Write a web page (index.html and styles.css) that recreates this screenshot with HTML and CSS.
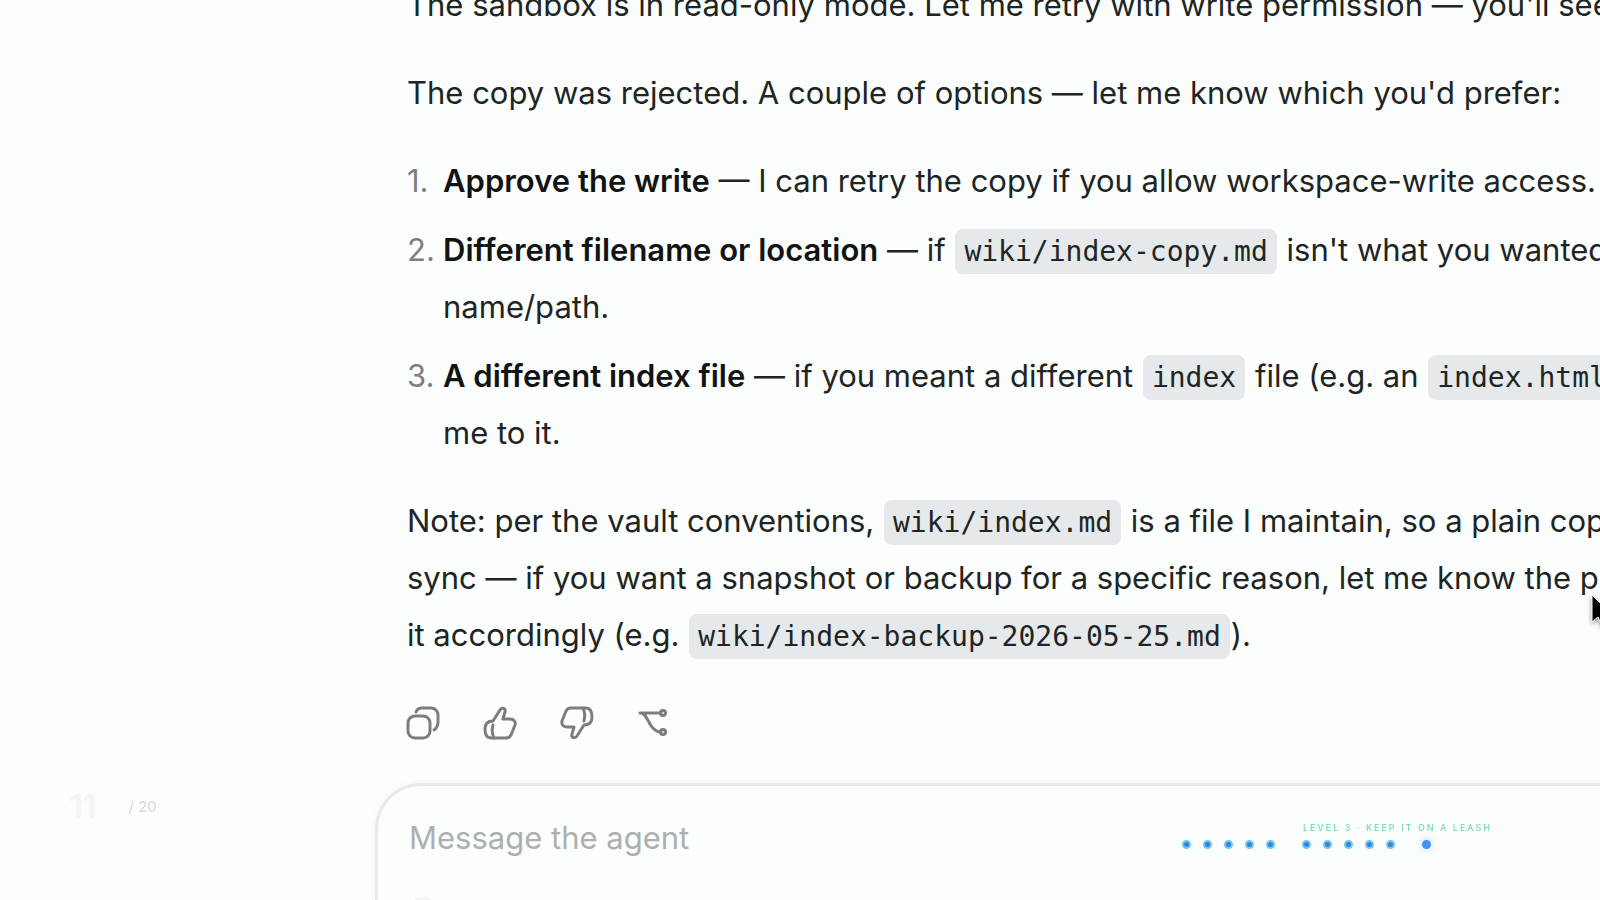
FILE: index.html
```
<!DOCTYPE html>
<html lang="en">
<head>
    <meta charset="UTF-8">
    <meta name="viewport" content="width=device-width, initial-scale=1.0">
    <title>Keep it on a leash</title>
    <link rel="stylesheet" href="styles.css">
</head>
<body>
    <main class="chat">
        <article class="message">
            <p>The sandbox is in read-only mode. Let me retry with write permission — you'll see</p>
            <p>The copy was rejected. A couple of options — let me know which you'd prefer:</p>
            <ol>
                <li><strong>Approve the write</strong> — I can retry the copy if you allow workspace-write access.</li>
                <li><strong>Different filename or location</strong> — if <code>wiki/index-copy.md</code> isn't what you wanted<br>name/path.</li>
                <li><strong>A different index file</strong> — if you meant a different <code>index</code> file (e.g. an <code>index.html</code><br>me to it.</li>
            </ol>
            <p>Note: per the vault conventions, <code>wiki/index.md</code> is a file I maintain, so a plain cop<br>sync — if you want a snapshot or backup for a specific reason, let me know the pu<br>it accordingly (e.g. <code>wiki/index-backup-2026-05-25.md</code>).</p>
        </article>
        <div class="actions">
            <button type="button" aria-label="Copy">
                <svg viewBox="0 0 32 32"><rect x="1" y="9" width="22" height="22" rx="7"/><path d="M9 5c1-3 3-4 6-4h9c4 0 7 3 7 7v7c0 4-1 6-4 8"/></svg>
            </button>
            <button type="button" aria-label="Good response">
                <svg viewBox="0 0 32 32"><path d="M9 14L16 3C18 0 22 1 21 5L19 12H26C30 12 32 15 31 18L27 28C26 30 24 31 22 31H7C3 31 1 28 1 22C1 17 3 14 9 14z"/><path d="M9 18C8 22 8 27 10 31"/></svg>
            </button>
            <button type="button" aria-label="Bad response">
                <svg viewBox="0 0 32 32"><path d="M23 18L16 29C14 32 10 31 11 27L13 20H6C2 20 0 17 1 14L5 4C6 2 8 1 10 1H25C29 1 31 4 31 10C31 15 29 18 23 18z"/><path d="M23 14C24 10 24 5 22 1"/></svg>
            </button>
            <button type="button" aria-label="Branch">
                <svg viewBox="0 0 32 32"><path d="M2 6h21M3 6c7 0 8 19 20 19"/><circle cx="25" cy="6" r="2.5"/><circle cx="25" cy="25" r="2.5"/></svg>
            </button>
        </div>
        <form class="composer">
            <input type="text" aria-label="Message the agent" placeholder="Message the agent">
            <button type="button" aria-label="Attach"></button>
        </form>
    </main>

    <div class="counter"><b>11</b><span>/ 20</span></div>

    <nav class="progress" aria-label="Slides">
        <span class="level">LEVEL 3 · KEEP IT ON A LEASH</span>
        <div class="dots">
            <div class="group">
                <a href="#1" aria-label="Slide 1"></a>
                <a href="#2" aria-label="Slide 2"></a>
                <a href="#3" aria-label="Slide 3"></a>
                <a href="#4" aria-label="Slide 4"></a>
                <a href="#5" aria-label="Slide 5"></a>
            </div>
            <div class="group">
                <a href="#6" aria-label="Slide 6"></a>
                <a href="#7" aria-label="Slide 7"></a>
                <a href="#8" aria-label="Slide 8"></a>
                <a href="#9" aria-label="Slide 9"></a>
                <a href="#10" aria-label="Slide 10"></a>
            </div>
            <div class="group">
                <a href="#11" class="current" aria-label="Slide 11"></a>
            </div>
        </div>
    </nav>

    <svg class="cursor" viewBox="0 0 24 36"><path d="M1 1v27l6-5 5 11 5-2-5-11h9z"/></svg>
</body>
</html>
```
FILE: styles.css
```
* {
    box-sizing: border-box;
}
body {
    margin: 0;
    height: 100vh;
    overflow: hidden;
    background-color: #fbfefd;
    color: #202423;
    font-family: Inter, "Liberation Sans", sans-serif;
}
button {
    padding: 0;
    border: none;
    background: none;
    cursor: pointer;
}

/* Conversation, anchored to the bottom of the window */
.chat {
    height: 100%;
    display: flex;
    flex-direction: column;
    justify-content: flex-end;
    overflow: hidden;
    padding-left: 375px;
}
.message {
    padding-left: 32px;
    font-size: 31px;
    line-height: 57px;
    white-space: nowrap;
}
.message p,
.message ol {
    margin: 0 0 31px;
}
.message ol {
    padding: 0;
    list-style: none;
    counter-reset: step;
}
.message li {
    padding-left: 36px;
    counter-increment: step;
}
.message li + li {
    margin-top: 12px;
}
.message li::before {
    content: counter(step) ".";
    display: inline-block;
    width: 36px;
    margin-left: -36px;
    color: #7c807f;
}
.message strong {
    font-weight: 600;
    color: #111413;
}
.message code {
    margin: 0 1px;
    padding: 6px 9px;
    border-radius: 8px;
    background-color: #e5e9ec;
    font-family: "DejaVu Sans Mono", monospace;
    font-size: 28px;
    line-height: 1;
}
.actions {
    display: flex;
    gap: 45px;
    margin: 13px 0 44px;
    padding-left: 32px;
}
.actions button {
    width: 32px;
    height: 32px;
}
.actions svg {
    display: block;
    overflow: visible;
    fill: none;
    stroke: #7b7e7d;
    stroke-width: 3;
    stroke-linecap: round;
    stroke-linejoin: round;
}
.composer {
    flex: none;
    height: 117px;
    padding: 27px 0 0 31px;
    border: 3px solid #e7eae9;
    border-width: 3px 0 0 3px;
    border-top-left-radius: 46px;
    box-shadow: 0 0 8px rgba(0, 0, 0, 0.04);
}
.composer input {
    display: block;
    width: 100%;
    height: 48px;
    padding: 0;
    border: none;
    outline: none;
    background: none;
    font-family: inherit;
    font-size: 31px;
}
.composer input::placeholder {
    color: #adb0af;
}
.composer button {
    display: block;
    width: 28px;
    height: 28px;
    margin-top: 36px;
    border: 2px solid #f1f3f2;
    border-radius: 50%;
}

/* Slide chrome, over the conversation */
.counter {
    position: fixed;
    left: 69px;
    bottom: 74px;
    display: flex;
    align-items: center;
    gap: 32px;
    font-size: 15px;
    color: #d3d6d5;
}
.counter b {
    font-size: 32px;
    color: #f3f6f5;
}
.progress {
    position: fixed;
    right: 108px;
    bottom: 51px;
    display: flex;
    flex-direction: column;
    align-items: flex-end;
    gap: 6px;
}
.level {
    font-size: 9px;
    line-height: 12px;
    letter-spacing: 2px;
    color: #64d5ad;
}
.dots {
    display: flex;
    gap: 27px;
    padding-right: 61px;
}
.group {
    display: flex;
    gap: 12px;
}
.dots a {
    width: 9px;
    height: 9px;
    border: 2px solid #6bc8e6;
    border-radius: 50%;
    background-color: #3584e4;
}
.dots .current {
    border-color: #4490f5;
    background-color: #4490f5;
    box-shadow: 0 0 8px rgba(68, 144, 245, 0.4);
}
.cursor {
    position: fixed;
    right: -15px;
    top: 594px;
    width: 24px;
    height: 36px;
    fill: #000;
    stroke: #fff;
    stroke-width: 1;
    filter: drop-shadow(0 2px 2px rgba(0, 0, 0, 0.4));
}
```
